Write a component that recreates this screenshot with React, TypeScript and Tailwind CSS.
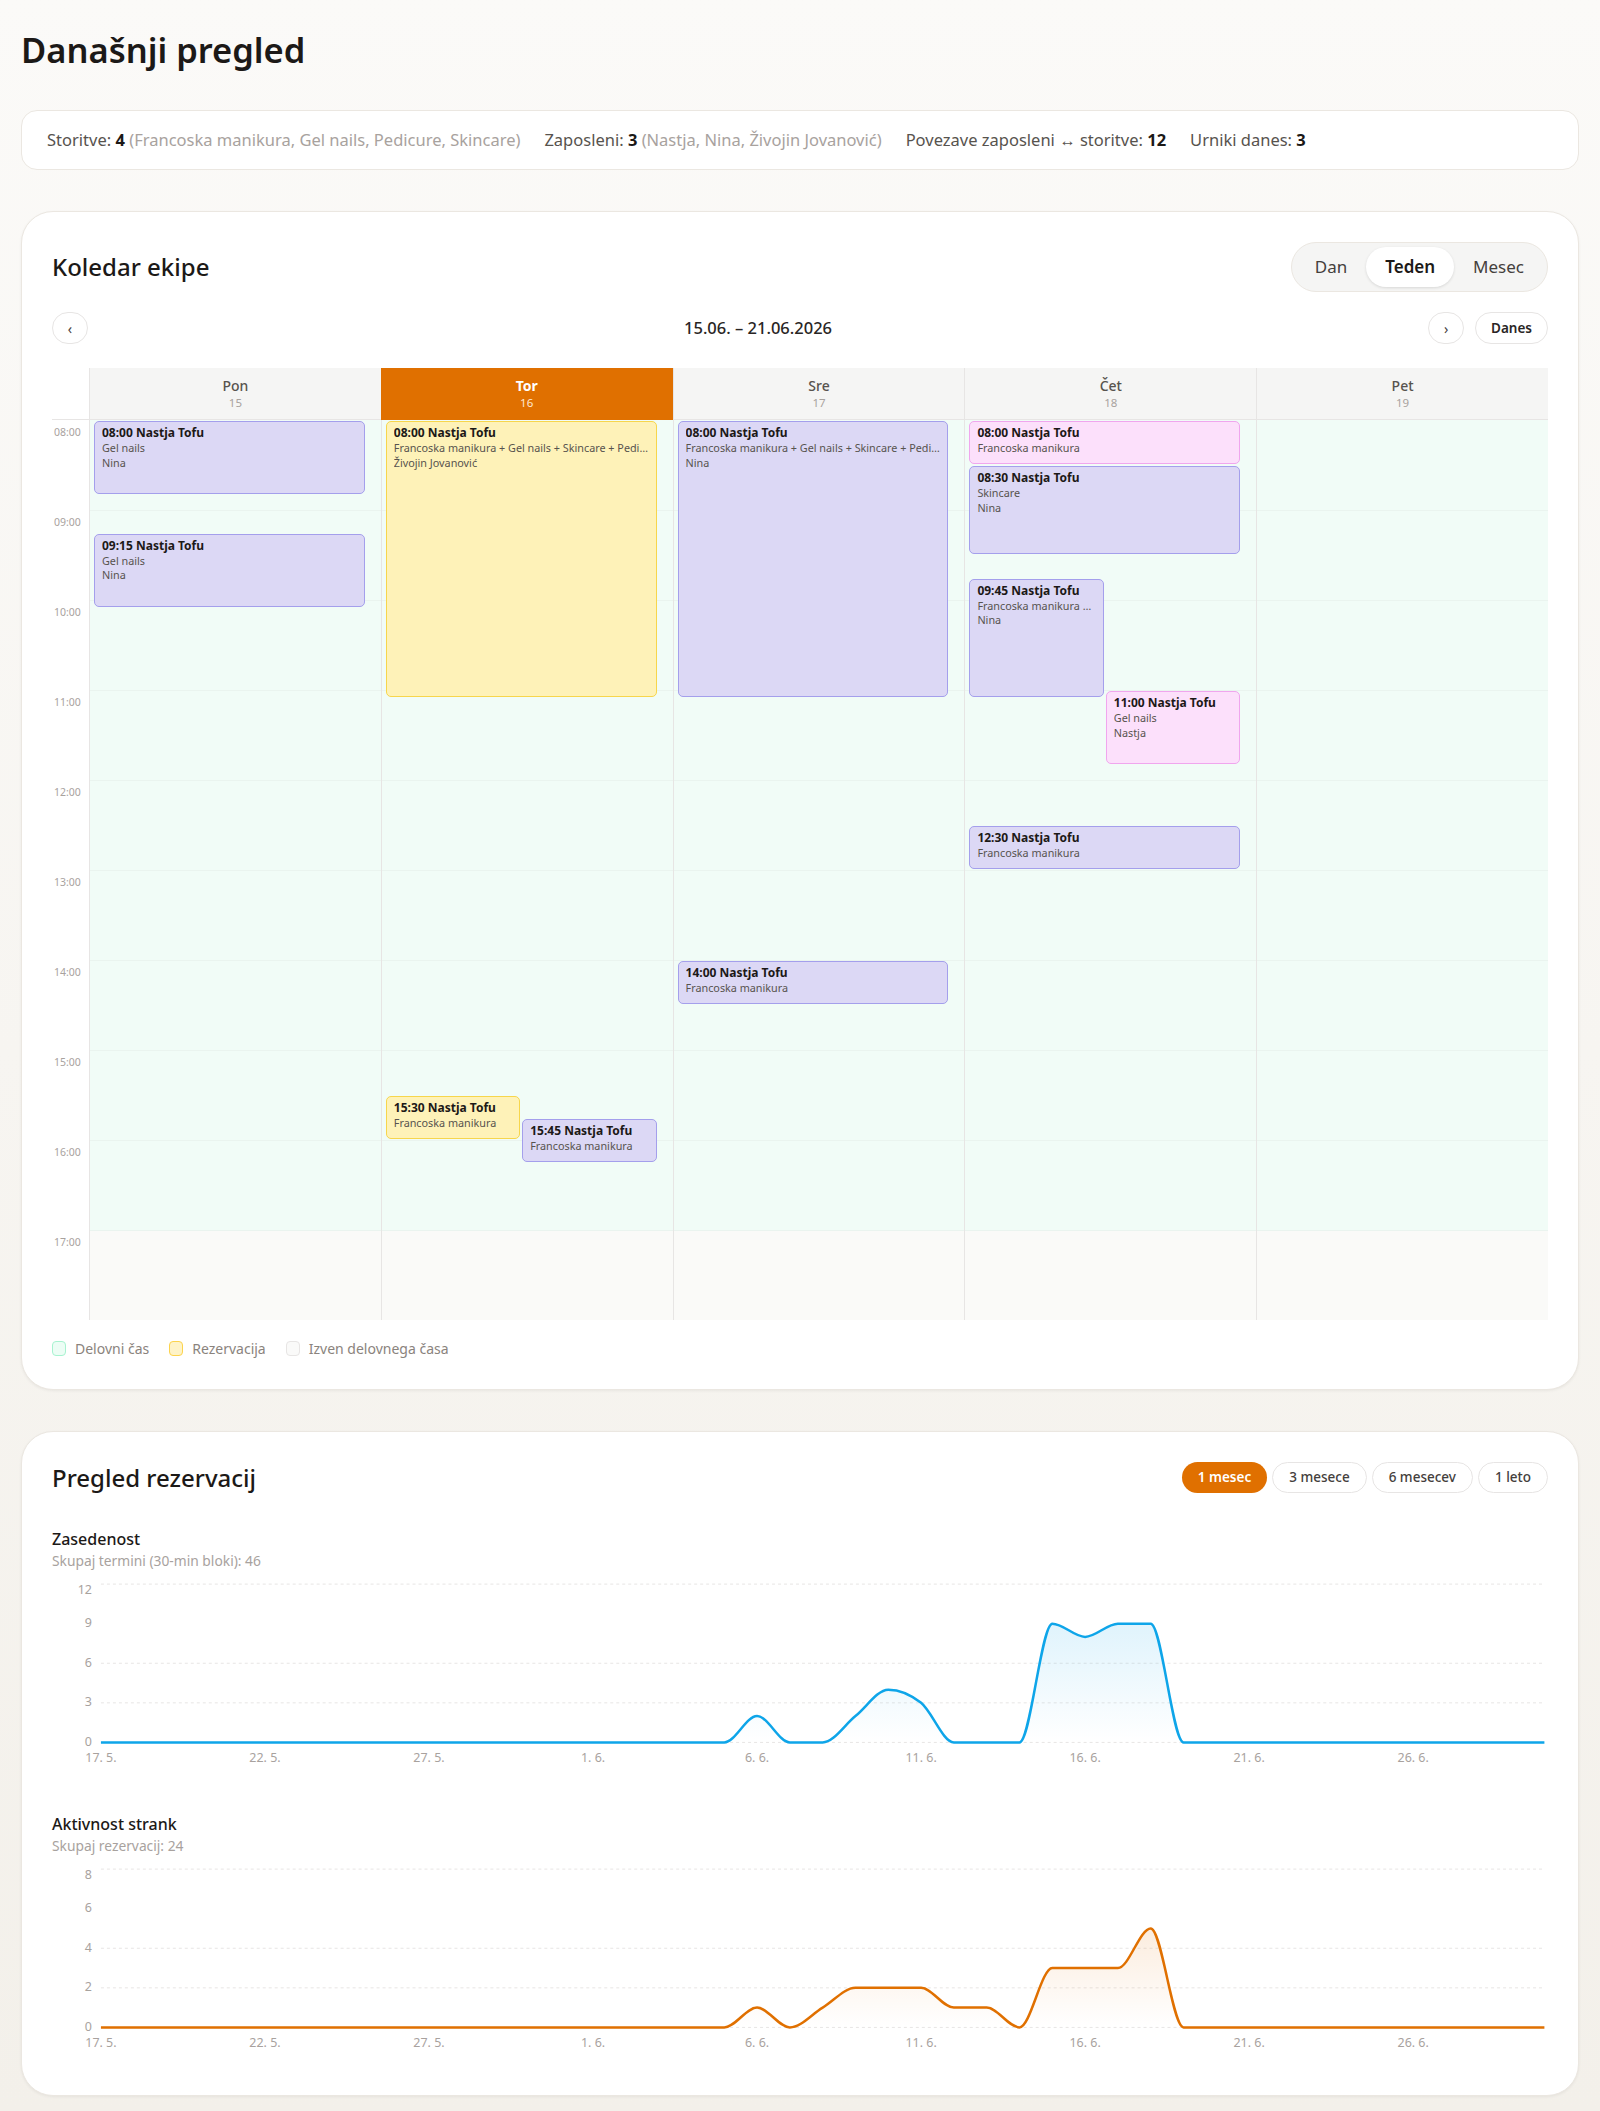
import React from "react";

type Ev = {
  day: number;
  start: string;
  dur: number;
  service: string;
  staff?: string;
  color: "purple" | "yellow" | "pink";
  half?: "left" | "right";
};

const days = [
  { name: "Pon", date: "15" },
  { name: "Tor", date: "16", today: true },
  { name: "Sre", date: "17" },
  { name: "Čet", date: "18" },
  { name: "Pet", date: "19" },
];

const hours = ["08:00", "09:00", "10:00", "11:00", "12:00", "13:00", "14:00", "15:00", "16:00", "17:00"];

const events: Ev[] = [
  { day: 0, start: "08:00", dur: 50, service: "Gel nails", staff: "Nina", color: "purple" },
  { day: 0, start: "09:15", dur: 50, service: "Gel nails", staff: "Nina", color: "purple" },
  { day: 1, start: "08:00", dur: 185, service: "Francoska manikura + Gel nails + Skincare + Pedicure", staff: "Živojin Jovanović", color: "yellow" },
  { day: 1, start: "15:30", dur: 30, service: "Francoska manikura", color: "yellow", half: "left" },
  { day: 1, start: "15:45", dur: 30, service: "Francoska manikura", color: "purple", half: "right" },
  { day: 2, start: "08:00", dur: 185, service: "Francoska manikura + Gel nails + Skincare + Pedicure", staff: "Nina", color: "purple" },
  { day: 2, start: "14:00", dur: 30, service: "Francoska manikura", color: "purple" },
  { day: 3, start: "08:00", dur: 30, service: "Francoska manikura", color: "pink" },
  { day: 3, start: "08:30", dur: 60, service: "Skincare", staff: "Nina", color: "purple" },
  { day: 3, start: "09:45", dur: 80, service: "Francoska manikura + Gel nails", staff: "Nina", color: "purple", half: "left" },
  { day: 3, start: "11:00", dur: 50, service: "Gel nails", staff: "Nastja", color: "pink", half: "right" },
  { day: 3, start: "12:30", dur: 30, service: "Francoska manikura", color: "purple" },
];

const colorClass = {
  purple: "bg-[#dcd8f5] border-[#a49fec]",
  yellow: "bg-[#fef2b8] border-[#f7d64c]",
  pink: "bg-[#fce0fb] border-[#f0a6ee]",
};

const halfClass = {
  full: "left-[4px] right-[16px]",
  left: "left-[4px] w-[calc(50%-11px)]",
  right: "left-[calc(50%-5px)] w-[calc(50%-11px)]",
};

// minutes from 08:00 -> px (90px per hour)
function toMin(t: string) {
  const [h, m] = t.split(":").map(Number);
  return (h - 8) * 60 + m;
}

function EventCard({ ev }: { ev: Ev }) {
  const top = toMin(ev.start) * 1.5 + 1;
  const height = ev.dur * 1.5 - 2;
  return (
    <div
      className={`absolute overflow-hidden rounded-[5px] border px-[7px] pt-[3px] ${colorClass[ev.color]} ${halfClass[ev.half ?? "full"]}`}
      style={{ top, height }}
    >
      <div className="truncate text-[12px] font-bold leading-[16px] text-[#1c1917]">{ev.start} Nastja Tofu</div>
      <div className="truncate text-[10.8px] leading-[14.5px] text-[#57534e]">{ev.service}</div>
      {ev.staff && <div className="truncate text-[10.8px] leading-[14.5px] text-[#57534e]">{ev.staff}</div>}
    </div>
  );
}

function Calendar() {
  return (
    <div className="mt-[22px] grid grid-cols-[37px_repeat(5,1fr)]">
      <div className="border-b border-[#e7e5e4]" />
      {days.map((d) => (
        <div
          key={d.name}
          className={`flex h-[52px] flex-col items-center justify-center border-b ${
            d.today ? "border-[#e07000] bg-[#e07000]" : "border-l border-[#e7e5e4] bg-[#f5f5f4]"
          }`}
        >
          <div className={`text-[14px] leading-[18px] ${d.today ? "font-bold text-white" : "font-medium text-[#57534e]"}`}>{d.name}</div>
          <div className={`text-[11.5px] leading-[16px] ${d.today ? "text-[#ffe8d2]" : "text-[#a8a29e]"}`}>{d.date}</div>
        </div>
      ))}

      <div className="flex flex-col">
        {hours.map((h) => (
          <div key={h} className="h-[90px] pt-[5px] pl-[2px] text-[10.5px] leading-[14px] text-[#a8a29e]">
            {h}
          </div>
        ))}
      </div>
      {days.map((d, di) => (
        <div key={d.name} className="relative border-l border-[#e7e5e4]">
          <div className="flex flex-col">
            {hours.map((h, hi) => (
              <div
                key={h}
                className={`h-[90px] ${hi < 9 ? "bg-[#f1fcf7]" : "bg-[#fafaf8]"} ${hi > 0 ? "border-t border-[#eaf4ef]" : ""}`}
              />
            ))}
          </div>
          {events
            .filter((e) => e.day === di)
            .map((e, i) => (
              <EventCard key={i} ev={e} />
            ))}
        </div>
      ))}
    </div>
  );
}

// monotone-x cubic interpolation (same idea as d3 curveMonotoneX)
function monotonePath(xs: number[], ys: number[]) {
  const n = xs.length;
  const h = xs[1] - xs[0];
  const s: number[] = [];
  for (let i = 0; i < n - 1; i++) s.push((ys[i + 1] - ys[i]) / h);
  const t: number[] = new Array(n).fill(0);
  for (let i = 1; i < n - 1; i++) {
    const s0 = s[i - 1];
    const s1 = s[i];
    const p = (s0 + s1) / 2;
    t[i] = (Math.sign(s0) + Math.sign(s1)) * Math.min(Math.abs(s0), Math.abs(s1), 0.5 * Math.abs(p)) || 0;
  }
  t[0] = (3 * s[0] - t[1]) / 2;
  t[n - 1] = (3 * s[n - 2] - t[n - 2]) / 2;
  let d = `M${xs[0]},${ys[0]}`;
  for (let i = 0; i < n - 1; i++) {
    const dx = h / 3;
    d += ` C${xs[i] + dx},${ys[i] + dx * t[i]} ${xs[i + 1] - dx},${ys[i + 1] - dx * t[i + 1]} ${xs[i + 1]},${ys[i + 1]}`;
  }
  return d;
}

const dateLabels = ["17. 5.", "22. 5.", "27. 5.", "1. 6.", "6. 6.", "11. 6.", "16. 6.", "21. 6.", "26. 6."];

function makeData(points: Record<number, number>) {
  return Array.from({ length: 45 }, (_, i) => points[i] ?? 0);
}

const occupancy = makeData({ 20: 2, 23: 2, 24: 4, 25: 3, 29: 9, 30: 8, 31: 9, 32: 9 });
const activity = makeData({ 20: 1, 22: 1, 23: 2, 24: 2, 25: 2, 26: 1, 27: 1, 29: 3, 30: 3, 31: 3, 32: 5 });

function Chart({ data, ticks, color, id, hideGrid }: { data: number[]; ticks: number[]; color: string; id: string; hideGrid: number }) {
  const W = 1498;
  const H = 195;
  const x0 = 49;
  const step = 32.85;
  const top = 8;
  const bottom = 166.5;
  const max = ticks[ticks.length - 1];
  const xs = data.map((_, i) => x0 + i * step);
  const ys = data.map((v) => bottom - (v / max) * (bottom - top));
  const line = monotonePath(xs, ys);
  const area = `${line} L${xs[xs.length - 1]},${bottom} L${xs[0]},${bottom} Z`;
  const yOf = (v: number) => bottom - (v / max) * (bottom - top);

  return (
    <svg viewBox={`0 0 ${W} ${H}`} className="mt-[5px] block h-[195px] w-full">
      <defs>
        <linearGradient id={id} x1="0" y1="0" x2="0" y2="1">
          <stop offset="0%" stopColor={color} stopOpacity="0.13" />
          <stop offset="100%" stopColor={color} stopOpacity="0" />
        </linearGradient>
      </defs>
      {ticks
        .filter((v) => v !== hideGrid)
        .map((v) => (
          <line key={v} x1={x0} x2={1494} y1={yOf(v)} y2={yOf(v)} stroke="#e7e5e4" strokeDasharray="3 3" />
        ))}
      {ticks.map((v, i) => (
        <text
          key={v}
          x={40}
          y={i === ticks.length - 1 ? yOf(v) + 6.5 : yOf(v)}
          textAnchor="end"
          dominantBaseline="middle"
          fontSize="12.5"
          fill="#a8a29e"
        >
          {v}
        </text>
      ))}
      {dateLabels.map((l, i) => (
        <text key={l} x={x0 + i * 5 * step} y={186} textAnchor="middle" fontSize="12.5" fill="#a8a29e">
          {l}
        </text>
      ))}
      <path d={area} fill={`url(#${id})`} />
      <path d={line} fill="none" stroke={color} strokeWidth="2.5" strokeLinejoin="round" />
    </svg>
  );
}

function Stat({ label, value, extra }: { label: string; value: string; extra?: string }) {
  return (
    <span>
      <span className="text-[#57534e]">{label} </span>
      <span className="font-bold text-[#1c1917]">{value}</span>
      {extra && <span className="text-[#a8a29e]"> {extra}</span>}
    </span>
  );
}

export default function App() {
  return (
    <div className="min-h-screen bg-linear-to-b from-[#fbfaf8] to-[#f3f0ea] px-[21px] pt-[24px] pb-[15px] font-['Segoe_UI','Noto_Sans',sans-serif] text-[#1c1917]">
      <h1 className="text-[34.5px] font-semibold leading-[52px]">Današnji pregled</h1>

      <div className="mt-[34px] flex h-[60px] items-center gap-[24px] rounded-2xl border border-[#ebe7e1] bg-white px-[25px] text-[16.5px]">
        <Stat label="Storitve:" value="4" extra="(Francoska manikura, Gel nails, Pedicure, Skincare)" />
        <Stat label="Zaposleni:" value="3" extra="(Nastja, Nina, Živojin Jovanović)" />
        <Stat label="Povezave zaposleni ↔ storitve:" value="12" />
        <Stat label="Urniki danes:" value="3" />
      </div>

      <div className="mt-[41px] rounded-[32px] border border-[#ebe7e1] bg-white px-[30px] pt-[30px] pb-[30px] shadow-[0_1px_3px_rgba(0,0,0,0.06)]">
        <div className="flex items-center justify-between">
          <h2 className="text-[24px] font-medium">Koledar ekipe</h2>
          <div className="flex h-[50px] items-center rounded-full border border-[#ebe7e1] bg-[#f5f5f4] p-[4px] text-[17px]">
            <div className="px-[19px] text-[#44403c]">Dan</div>
            <div className="flex h-[40px] items-center rounded-full bg-white px-[19px] font-semibold shadow-[0_1px_3px_rgba(0,0,0,0.12)]">Teden</div>
            <div className="px-[19px] text-[#44403c]">Mesec</div>
          </div>
        </div>

        <div className="mt-[18px] flex h-[36px] items-center">
          <button className="flex h-[32px] w-[36px] items-center justify-center rounded-full border border-[#e7e5e4] bg-white text-[14px] text-[#44403c]">‹</button>
          <div className="flex-1 text-center text-[16.5px] font-medium text-[#292524]">15.06. – 21.06.2026</div>
          <div className="flex items-center gap-[11px]">
            <button className="flex h-[32px] w-[36px] items-center justify-center rounded-full border border-[#e7e5e4] bg-white text-[14px] text-[#44403c]">›</button>
            <button className="h-[32px] rounded-full border border-[#e7e5e4] bg-white px-[15px] text-[13.5px] font-semibold text-[#292524]">Danes</button>
          </div>
        </div>

        <Calendar />

        <div className="mt-[18px] flex items-center gap-[20px] text-[14px] text-[#8a837d]">
          <div className="flex items-center gap-[9px]">
            <span className="h-[15px] w-[14px] rounded-[4px] border border-[#a7f3d0] bg-[#ecfdf5]" />
            Delovni čas
          </div>
          <div className="flex items-center gap-[9px]">
            <span className="h-[15px] w-[14px] rounded-[4px] border border-[#fcd34d] bg-[#fef3c7]" />
            Rezervacija
          </div>
          <div className="flex items-center gap-[9px]">
            <span className="h-[15px] w-[14px] rounded-[4px] border border-[#e7e5e4] bg-[#fafaf9]" />
            Izven delovnega časa
          </div>
        </div>
      </div>

      <div className="mt-[41px] rounded-[32px] border border-[#ebe7e1] bg-white px-[30px] pt-[29px] pb-[39px] shadow-[0_1px_3px_rgba(0,0,0,0.06)]">
        <div className="flex h-[33px] items-center justify-between">
          <h2 className="text-[24px] font-medium">Pregled rezervacij</h2>
          <div className="flex gap-[5px] text-[13.5px] font-medium">
            <button className="h-[31px] rounded-full bg-[#e07000] px-[16px] font-semibold text-white">1 mesec</button>
            <button className="h-[31px] rounded-full border border-[#e7e5e4] bg-white px-[16px] text-[#44403c]">3 mesece</button>
            <button className="h-[31px] rounded-full border border-[#e7e5e4] bg-white px-[16px] text-[#44403c]">6 mesecev</button>
            <button className="h-[31px] rounded-full border border-[#e7e5e4] bg-white px-[16px] text-[#44403c]">1 leto</button>
          </div>
        </div>

        <div className="mt-[33px]">
          <div className="text-[16px] font-medium leading-[24px]">Zasedenost</div>
          <div className="text-[13.8px] leading-[20px] text-[#a8a29e]">Skupaj termini (30-min bloki): 46</div>
          <Chart data={occupancy} ticks={[0, 3, 6, 9, 12]} color="#0ea5e9" id="occ" hideGrid={9} />
        </div>

        <div className="mt-[41px]">
          <div className="text-[16px] font-medium leading-[24px]">Aktivnost strank</div>
          <div className="text-[13.8px] leading-[20px] text-[#a8a29e]">Skupaj rezervacij: 24</div>
          <Chart data={activity} ticks={[0, 2, 4, 6, 8]} color="#e07000" id="act" hideGrid={6} />
        </div>
      </div>
    </div>
  );
}
